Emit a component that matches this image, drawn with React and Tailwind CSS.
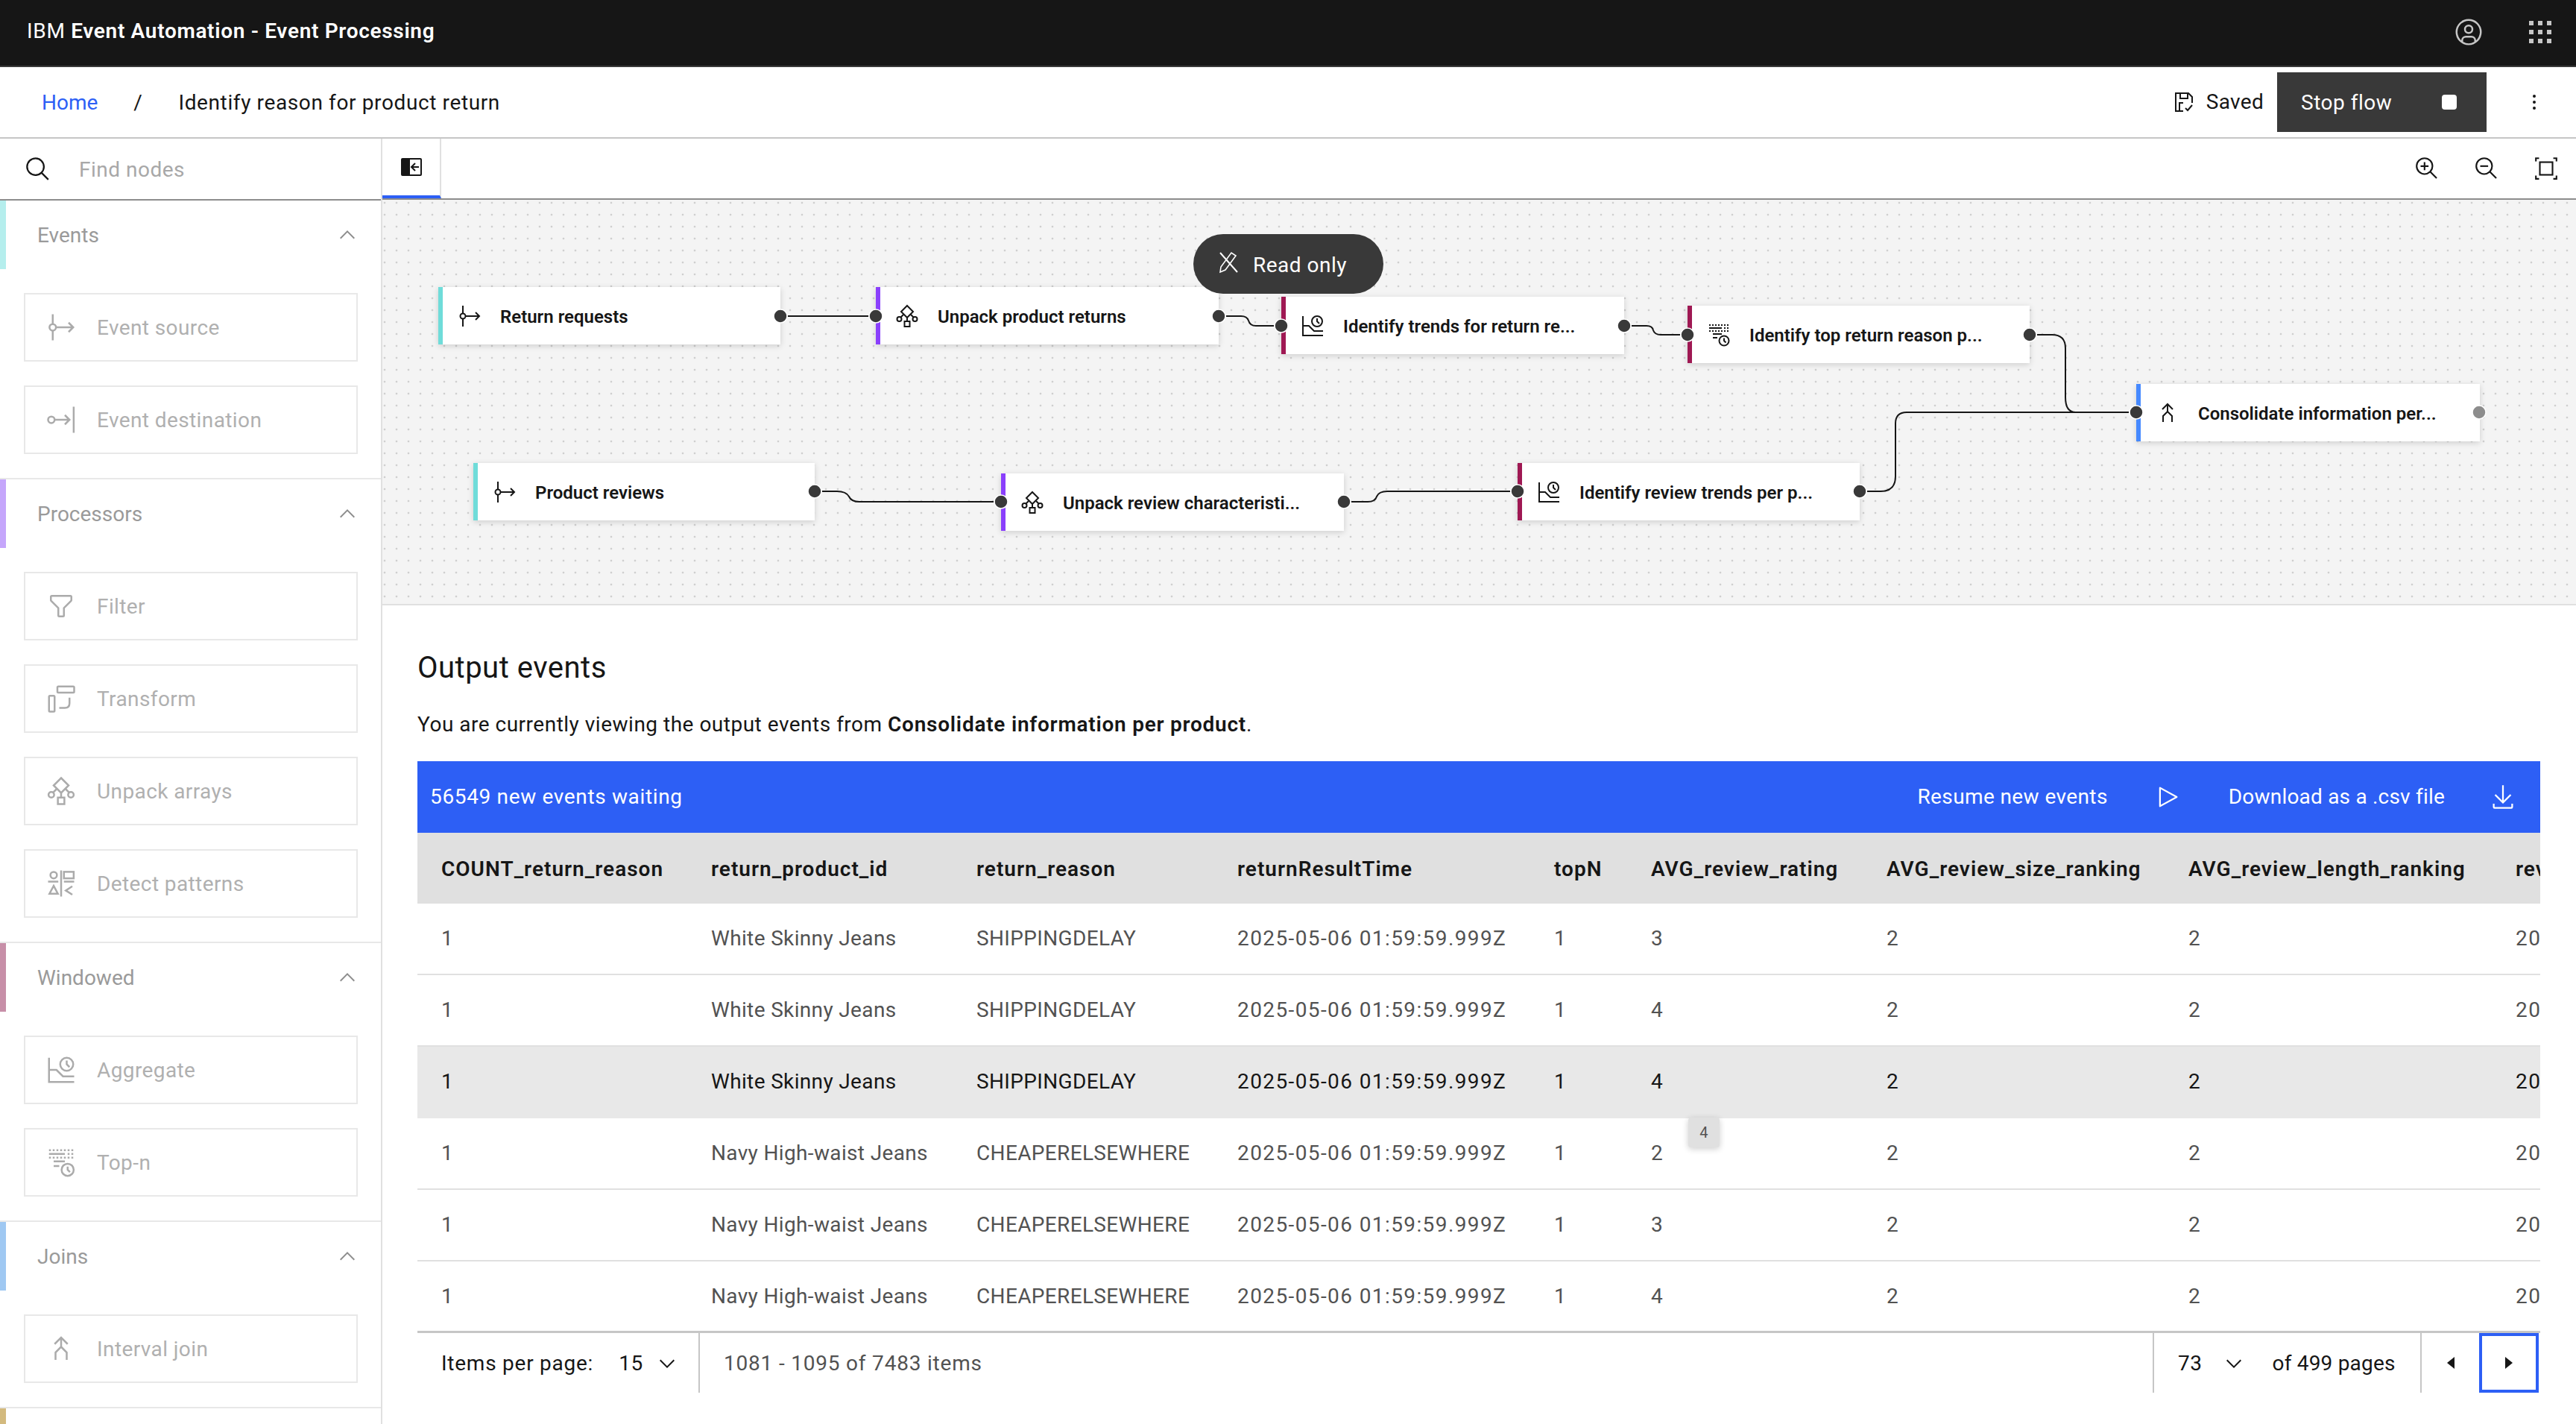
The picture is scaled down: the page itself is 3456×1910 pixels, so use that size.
const Icon = ({ size = 32, className = '', children }) => (
  <svg width={size} height={size} viewBox="0 0 32 32" fill="currentColor" className={`shrink-0 ${className}`}>
    {children}
  </svg>
)

const Line = ({ children }) => (
  <g fill="none" stroke="currentColor" strokeWidth="2">{children}</g>
)

const ChevronUp = (p) => <Icon {...p}><path d="M16 10L26 20 24.6 21.4 16 12.8 7.4 21.4 6 20z" /></Icon>
const ChevronDown = (p) => <Icon {...p}><path d="M16 22L6 12 7.4 10.6 16 19.2 24.6 10.6 26 12z" /></Icon>

const SourceIcon = (p) => <Icon {...p}><Line><path d="M7 2V12M7 20V30" /><circle cx="7" cy="16" r="3.5" /><path d="M10.5 16H29M24 11l5 5-5 5" /></Line></Icon>
const DestIcon = (p) => <Icon {...p}><Line><circle cx="5.5" cy="16" r="3.5" /><path d="M9 16H25M20 11l5 5-5 5M29.5 2V30" /></Line></Icon>
const FilterIcon = (p) => <Icon {...p}><path d="M18 28H14a2 2 0 0 1-2-2V18.41L4.59 11A2 2 0 0 1 4 9.59V6A2 2 0 0 1 6 4H26a2 2 0 0 1 2 2V9.59A2 2 0 0 1 27.41 11L20 18.41V26A2 2 0 0 1 18 28ZM6 6V9.59l8 8V26h4V17.59l8-8V6Z" /></Icon>
const TransformIcon = (p) => <Icon {...p}><Line><rect x="12" y="3" width="18" height="6.5" rx="1" /><rect x="3" y="13" width="6" height="17" rx="1" /><path d="M14 26h6q5 0 5-5v-6" /></Line></Icon>
const UnpackIcon = (p) => <Icon {...p}><Line><path d="M16 2l8 8-8 8-8-8z" /><circle cx="5.5" cy="20" r="3" /><circle cx="26.5" cy="20" r="3" /><rect x="12.5" y="23" width="7" height="7" /><path d="M16 18v5M11 14l-3.5 3.5M21 14l3.5 3.5" /></Line></Icon>
const PatternsIcon = (p) => <Icon {...p}><Line><circle cx="8" cy="7" r="3.5" /><rect x="19" y="3.5" width="10.5" height="7" /><path d="M16 2V30M2 14H13M19 14H30" /><path d="M8 18.5l4.5 8.5h-9zM28 19l-7 4.5 7 4.5" /></Line></Icon>
const AggregateIcon = (p) => <Icon {...p}><Line><path d="M3 3V29H30M3 16H11L18 23H30" /><circle cx="22" cy="10" r="7" /><path d="M22 6V10L25 13" /></Line></Icon>
const TopNIcon = (p) => (
  <Icon {...p}>
    <Line>
      <path d="M3 3H29M3 11H29" strokeDasharray="2 2" />
      <path d="M3 7H20" />
      <path d="M23 7H29" strokeDasharray="2 2" />
      <path d="M8 15H20M8 20H14" />
      <circle cx="23" cy="24" r="6.5" />
      <path d="M23 20.5V24L25.5 26.5" />
    </Line>
  </Icon>
)
const JoinIcon = (p) => <Icon {...p}><Line><path d="M9 11l7-7 7 7M16 4V14L10 20V28M16 14l6 6V28" /></Line></Icon>

const sections = [
  {
    title: 'Events',
    bar: 'bg-[#b5eeed]',
    items: [
      { label: 'Event source', icon: SourceIcon },
      { label: 'Event destination', icon: DestIcon },
    ],
  },
  {
    title: 'Processors',
    bar: 'bg-[#c5a6fb]',
    items: [
      { label: 'Filter', icon: FilterIcon },
      { label: 'Transform', icon: TransformIcon },
      { label: 'Unpack arrays', icon: UnpackIcon },
      { label: 'Detect patterns', icon: PatternsIcon },
    ],
  },
  {
    title: 'Windowed',
    bar: 'bg-[#c78fa8]',
    items: [
      { label: 'Aggregate', icon: AggregateIcon },
      { label: 'Top-n', icon: TopNIcon },
    ],
  },
  {
    title: 'Joins',
    bar: 'bg-[#9fc8f2]',
    items: [{ label: 'Interval join', icon: JoinIcon }],
  },
]

const Section = ({ title, bar, items }) => (
  <div className="border-b-2 border-[#e8e8e8]">
    <div className="flex h-[92px] items-center pr-[29px]">
      <div className={`h-full w-2 ${bar}`} />
      <span className="ml-[42px] flex-1 pt-0.5 tracking-normal text-[#9a9a9a]">{title}</span>
      <ChevronUp className="text-[#8d8d8d]" />
    </div>
    <div className="flex flex-col gap-8 py-8 pl-8">
      {items.map(({ label, icon: ItemIcon }) => (
        <div key={label} className="flex h-[92px] w-[448px] items-center gap-7 border-2 border-[#e8e8e8] pl-7 tracking-[0.4px] text-[#b0b0b0]">
          <ItemIcon size={40} className="text-[#ababab]" />
          <span className="pt-0.5">{label}</span>
        </div>
      ))}
    </div>
  </div>
)

const nodes = [
  { name: 'Return requests', pos: 'left-[75px] top-[117px] w-[459px] border-[#6fdcd9]', icon: SourceIcon },
  { name: 'Unpack product returns', pos: 'left-[662px] top-[117px] w-[460px] border-[#8a3ffc]', icon: UnpackIcon },
  { name: 'Identify trends for return re...', pos: 'left-[1206px] top-[130px] w-[460px] border-[#9f1853]', icon: AggregateIcon },
  { name: 'Identify top return reason p...', pos: 'left-[1751px] top-[142px] w-[459px] border-[#9f1853]', icon: TopNIcon },
  { name: 'Consolidate information per...', pos: 'left-[2353px] top-[247px] w-[461px] border-[#4589ff]', icon: JoinIcon },
  { name: 'Product reviews', pos: 'left-[122px] top-[353px] w-[458px] border-[#6fdcd9]', icon: SourceIcon },
  { name: 'Unpack review characteristi...', pos: 'left-[830px] top-[367px] w-[460px] border-[#8a3ffc]', icon: UnpackIcon },
  { name: 'Identify review trends per p...', pos: 'left-[1523px] top-[353px] w-[459px] border-[#9f1853]', icon: AggregateIcon },
]

const Node = ({ name, pos, icon: NodeIcon }) => (
  <div className={`absolute flex h-[77px] items-center gap-[25px] border-l-[6px] bg-white pl-5 text-[24px] font-semibold tracking-normal text-[#161616] shadow-[0_2px_8px_rgba(0,0,0,0.16)] ${pos}`}>
    <NodeIcon />
    <span className="whitespace-nowrap pt-0.5">{name}</span>
  </div>
)

const edges = [
  'M544 156H652',
  'M1132 156H1152Q1160 156 1162 162Q1164 169 1172 169H1196',
  'M1676 169H1696Q1704 169 1705 175Q1707 181 1715 181H1741',
  'M2220 181H2240Q2258 181 2258 199V265Q2258 285 2272 285H2343',
  'M590 391H610Q622 391 626 398Q629 405 640 405H820',
  'M1300 405H1322Q1332 405 1334 398Q1337 391 1348 391H1513',
  'M1992 391H2010Q2030 391 2030 371V300Q2030 285 2045 285H2343',
]

const ports = [
  [534, 156], [662, 156], [1122, 156], [1206, 169], [1666, 169], [1751, 181], [2210, 181], [2353, 285],
  [580, 391], [830, 405], [1290, 405], [1523, 391], [1982, 391],
]

const Canvas = () => (
  <div className="relative h-[544px] border-b-2 border-[#e0e0e0] bg-[#f4f4f4] bg-[radial-gradient(#cfcfcf_1.5px,transparent_1.6px)] bg-[length:16px_16px] bg-[position:11px_12px]">
    {nodes.map((n) => <Node key={n.name} {...n} />)}
    <svg className="absolute inset-0" width="2943" height="543" fill="none">
      {edges.map((d) => <path key={d} d={d} stroke="#161616" strokeWidth="2" />)}
      {ports.map(([cx, cy]) => <circle key={`${cx}-${cy}`} cx={cx} cy={cy} r="9" fill="#393939" stroke="#fff" strokeWidth="1.5" />)}
      <circle cx="2813" cy="285" r="9" fill="#8d8d8d" stroke="#fff" strokeWidth="1.5" />
    </svg>
    <div className="absolute left-[1088px] top-[46px] flex h-20 w-[255px] items-center gap-4 rounded-[40px] bg-[#393939] pl-8 text-white">
      <Icon size={32} className="-mt-1">
        <Line>
          <path d="M4 3L27 29" />
          <path d="M4 29L5 22 19 3 25 7 11 26z" strokeWidth="1.6" />
        </Line>
      </Icon>
      <span className="pt-1">Read only</span>
    </div>
  </div>
)

const columns = [
  'COUNT_return_reason', 'return_product_id', 'return_reason', 'returnResultTime', 'topN',
  'AVG_review_rating', 'AVG_review_size_ranking', 'AVG_review_length_ranking', 'reviewResultTime',
]

const rows = [
  ['White Skinny Jeans', 'SHIPPINGDELAY', '3'],
  ['White Skinny Jeans', 'SHIPPINGDELAY', '4'],
  ['White Skinny Jeans', 'SHIPPINGDELAY', '4', true],
  ['Navy High-waist Jeans', 'CHEAPERELSEWHERE', '2'],
  ['Navy High-waist Jeans', 'CHEAPERELSEWHERE', '3'],
  ['Navy High-waist Jeans', 'CHEAPERELSEWHERE', '4'],
]

const gridCols = 'grid grid-cols-[362px_356px_350px_425px_130px_316px_405px_439px_400px] items-center'
const stamp = <span className="tracking-[1.4px]">2025-05-06 01:59:59.999Z</span>

const Table = () => (
  <div className="relative mt-[29px] w-[2848px]">
    <div className="flex h-24 items-center justify-between bg-[#2d5ff5] pl-[17px] pr-8 text-white">
      <span className="tracking-[0.65px]">56549 new events waiting</span>
      <div className="flex items-center">
        <span className="tracking-[0.4px]">Resume new events</span>
        <Icon size={36} className="ml-[62px] mr-16">
          <path d="M7 28a1 1 0 0 1-1-1V5a1 1 0 0 1 1.4819-.8763l20 11a1 1 0 0 1 0 1.7525l-20 11A1.0005 1.0005 0 0 1 7 28ZM8 6.6907V25.3093L24.925 16Z" />
        </Icon>
        <span className="tracking-[0.2px]">Download as a .csv file</span>
        <Icon size={36} className="ml-[60px]">
          <path d="M26 24v4H6v-4H4v4a2 2 0 0 0 2 2H26a2 2 0 0 0 2-2V24Z" />
          <path d="M26 14 24.59 12.59 17 20.17 17 2 15 2 15 20.17 7.41 12.59 6 14 16 24 26 14z" />
        </Icon>
      </div>
    </div>
    <div className="overflow-hidden">
      <div className={`${gridCols} h-[95px] bg-[#e0e0e0] font-semibold tracking-[1px] text-[#161616]`}>
        {columns.map((c) => <div key={c} className="whitespace-nowrap pl-8 pt-0.5">{c}</div>)}
      </div>
      {rows.map(([product, reason, rating, hover], i) => (
        <div
          key={i}
          className={`${gridCols} h-24 tracking-[0.35px] ${i === 5 ? 'border-b-[3px] border-[#c6c6c6]' : 'border-b-2 border-[#e0e0e0]'} ${hover ? 'border-[#e8e8e8] bg-[#e8e8e8] text-[#161616]' : 'text-[#525252]'}`}
        >
          {['1', product, reason, stamp, '1', rating, '2', '2', stamp].map((v, j) => (
            <div key={j} className="whitespace-nowrap pl-8">{v}</div>
          ))}
        </div>
      ))}
    </div>
    <div className="absolute left-[1705px] top-[478px] flex h-10 w-[42px] items-center justify-center rounded bg-[#e0e0e0] text-[20px] text-[#525252] shadow-[0_2px_8px_rgba(0,0,0,0.2)]">
      4
    </div>
    <div className="flex h-20 items-stretch text-[#161616]">
      <div className="flex w-[379px] items-center border-r-2 border-[#c6c6c6] pl-8 pt-0.5">
        <span className="tracking-[0.75px]">Items per page:</span>
        <span className="ml-[34px]">15</span>
        <ChevronDown className="ml-4" />
      </div>
      <div className="flex flex-1 items-center pl-8 pt-0.5 tracking-[0.8px] text-[#525252]">1081 - 1095 of 7483 items</div>
      <div className="flex w-[359px] items-center border-l-2 border-[#c6c6c6] pl-8 pt-0.5">
        <span>73</span>
        <ChevronDown className="ml-[27px]" />
        <span className="ml-[35px] tracking-[0.2px]">of 499 pages</span>
      </div>
      <div className="flex w-[161px] border-l-2 border-[#c6c6c6] pr-0.5">
        <div className="flex w-[77px] items-center justify-center">
          <Icon><path d="M21 24 11 16 21 8z" /></Icon>
        </div>
        <div className="flex w-20 items-center justify-center border-4 border-[#2d5ff5]">
          <Icon><path d="M11 8 21 16 11 24z" /></Icon>
        </div>
      </div>
    </div>
  </div>
)

const App = () => (
  <div className="flex h-[1910px] w-[3456px] flex-col overflow-hidden bg-white text-[28px] tracking-[0.5px] text-[#161616] [font-family:Roboto,sans-serif]">
    <header className="flex h-[90px] shrink-0 items-center justify-between border-b-2 border-[#393939] bg-[#161616] pl-9 pr-7 text-white">
      <span className="-mt-1 tracking-[0.68px]">IBM <span className="font-semibold">Event Automation - Event Processing</span></span>
      <div className="-mt-0.5 flex items-center gap-14 text-[#c6c6c6]">
        <Icon size={40}>
          <path d="M16 8a5 5 0 1 0 5 5A5 5 0 0 0 16 8Zm0 8a3 3 0 1 1 3-3A3.0034 3.0034 0 0 1 16 16Z" />
          <path d="M16 2A14 14 0 1 0 30 16 14.0158 14.0158 0 0 0 16 2ZM10 26.3765V25a3.0033 3.0033 0 0 1 3-3h6a3.0033 3.0033 0 0 1 3 3v1.3765a11.8989 11.8989 0 0 1-12 0Zm13.9925-1.4507A5.0016 5.0016 0 0 0 19 20H13a5.0016 5.0016 0 0 0-4.9925 4.9258 12 12 0 1 1 15.985 0Z" />
        </Icon>
        <Icon size={40}>
          {[4, 13.6, 23.2].map((y) => [4, 13.6, 23.2].map((x) => <rect key={`${x}-${y}`} x={x} y={y} width="4.8" height="4.8" />))}
        </Icon>
      </div>
    </header>

    <div className="flex h-24 shrink-0 items-center border-b-2 border-[#c6c6c6] pl-14 pr-10">
      <span className="pt-0.5 tracking-normal text-[#2d5ff5]">Home</span>
      <span className="ml-[48px] pt-0.5">/</span>
      <span className="ml-[48px] flex-1 pt-0.5 tracking-[0.62px]">Identify reason for product return</span>
      <Icon>
        <Line>
          <path d="M15 28H5V4H22L27 9V17" />
          <path d="M11 4V11H21V4M10 28V17H15" />
          <path d="M18 24l3 3 6-7" />
        </Line>
      </Icon>
      <span className="ml-3.5 tracking-[0.3px]">Saved</span>
      <div className="ml-[18px] flex h-20 w-[281px] items-center justify-between bg-[#393939] pl-8 pr-10 text-white">
        <span className="pt-0.5">Stop flow</span>
        <div className="size-5 rounded-sm bg-white" />
      </div>
      <Icon className="ml-12">
        <circle cx="16" cy="8" r="2" />
        <circle cx="16" cy="16" r="2" />
        <circle cx="16" cy="24" r="2" />
      </Icon>
    </div>

    <div className="flex min-h-0 flex-1">
      <aside className="w-[513px] shrink-0 overflow-hidden border-r-2 border-[#e0e0e0]">
        <div className="flex h-[83px] items-center gap-[37px] border-b-2 border-[#8d8d8d] pl-[33px] text-[#a8a8a8]">
          <Icon size={36} className="text-[#161616]">
            <path d="M29 27.5859l-7.5521-7.5521a11.0177 11.0177 0 1 0-1.4141 1.4141L27.5859 29ZM4 13a9 9 0 1 1 9 9A9.01 9.01 0 0 1 4 13Z" />
          </Icon>
          <span className="pt-0.5">Find nodes</span>
        </div>
        {sections.map((s) => <Section key={s.title} {...s} />)}
        <div className="h-[92px] w-2 bg-[#d3ba7e]" />
      </aside>

      <main className="min-w-0 flex-1">
        <div className="flex h-[82px] items-stretch justify-between border-b-2 border-[#8d8d8d]">
          <div className="flex w-[79px] items-center justify-center border-r-2 border-b-4 border-r-[#e0e0e0] border-b-[#2d5ff5]">
            <svg width="28" height="24" viewBox="0 0 28 24">
              <rect x="1" y="1" width="26" height="22" rx="1" fill="none" stroke="#161616" strokeWidth="2" />
              <rect x="1" y="1" width="11" height="22" fill="#161616" />
              <path d="M24 12H15M19 7l-5 5 5 5" fill="none" stroke="#161616" strokeWidth="2" />
            </svg>
          </div>
          <div className="flex">
            <div className="flex w-20 items-center justify-center">
              <Icon size={34}>
                <path d="M18 12L14 12 14 8 12 8 12 12 8 12 8 14 12 14 12 18 14 18 14 14 18 14 18 12z" />
                <path d="M21.4479 20A10.856 10.856 0 0 0 24 13 11 11 0 1 0 13 24a10.856 10.856 0 0 0 7-2.5521L27.5859 29 29 27.5859ZM13 22a9 9 0 1 1 9-9A9.01 9.01 0 0 1 13 22Z" />
              </Icon>
            </div>
            <div className="flex w-20 items-center justify-center">
              <Icon size={34}>
                <path d="M8 12H18V14H8z" />
                <path d="M21.4479 20A10.856 10.856 0 0 0 24 13 11 11 0 1 0 13 24a10.856 10.856 0 0 0 7-2.5521L27.5859 29 29 27.5859ZM13 22a9 9 0 1 1 9-9A9.01 9.01 0 0 1 13 22Z" />
              </Icon>
            </div>
            <div className="flex w-20 items-center justify-center">
              <Icon size={34}>
                <Line>
                  <path d="M3 7V3H7M25 3H29V7M29 25V29H25M7 29H3V25" />
                  <rect x="8" y="8" width="16" height="16" />
                </Line>
              </Icon>
            </div>
          </div>
        </div>
        <Canvas />
        <div className="pl-[47px] pt-14">
          <h2 className="pt-0.5 text-[40px] leading-[52px]">Output events</h2>
          <p className="mt-[30px] leading-10">
            You are currently viewing the output events from <b className="font-semibold tracking-[0.75px]">Consolidate information per product</b>.
          </p>
          <Table />
        </div>
      </main>
    </div>
  </div>
)

export default App
